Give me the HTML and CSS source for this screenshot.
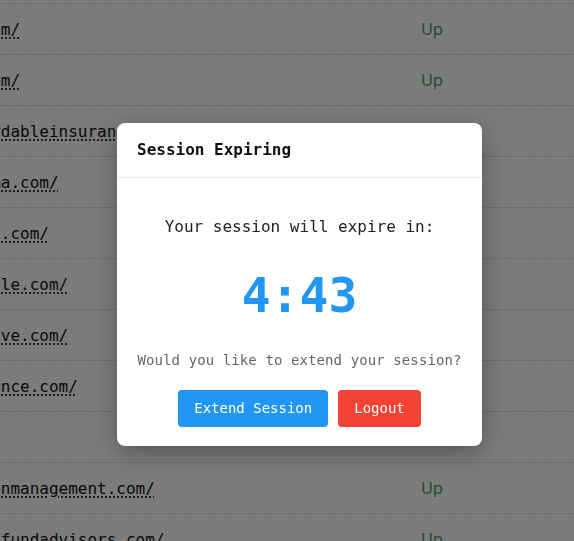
FILE: index.html
```html
<!DOCTYPE html>
<html lang="en">
<head>
<meta charset="utf-8">
<title>Session Expiring</title>
<link rel="stylesheet" href="styles.css">
</head>
<body>
<div class="table">
  <div class="row"><a class="url" href="#">https://www.startpage.com/</a><span class="status">Up</span></div>
  <div class="row"><a class="url" href="#">https://www.ab.com/</a><span class="status">Up</span></div>
  <div class="row"><a class="url" href="#">https://www.cd.com/</a><span class="status">Up</span></div>
  <div class="row"><a class="url" href="#">https://www.affordableinsurance.com/</a><span class="status">Up</span></div>
  <div class="row"><a class="url" href="#">https://www.cinema.com/</a><span class="status">Up</span></div>
  <div class="row"><a class="url" href="#">https://www.trust.com/</a><span class="status">Up</span></div>
  <div class="row"><a class="url" href="#">https://www.example.com/</a><span class="status">Up</span></div>
  <div class="row"><a class="url" href="#">https://www.archive.com/</a><span class="status">Up</span></div>
  <div class="row"><a class="url" href="#">https://www.alliance.com/</a><span class="status">Up</span></div>
  <div class="row"><a class="url" href="#">https://x.com/</a><span class="status">Up</span></div>
  <div class="row"><a class="url" href="#">https://www.goldenmanagement.com/</a><span class="status">Up</span></div>
  <div class="row"><a class="url" href="#">https://www.indexfundadvisors.com/</a><span class="status">Up</span></div>
</div>

<div class="overlay">
  <div class="modal">
    <div class="modal-header">Session Expiring</div>
    <div class="modal-body">
      <p class="lead">Your session will expire in:</p>
      <div class="timer">4:43</div>
      <p class="question">Would you like to extend your session?</p>
      <div class="actions">
        <button class="btn btn-extend">Extend Session</button>
        <button class="btn btn-logout">Logout</button>
      </div>
    </div>
  </div>
</div>
</body>
</html>
```
FILE: styles.css
```css
* { box-sizing: border-box; }

html, body {
  margin: 0;
  padding: 0;
  height: 100%;
  overflow: hidden;
}

body {
  background: #f6f6f6;
  font-family: "DejaVu Sans Mono", "Liberation Mono", monospace;
  color: #111;
}

.table {
  margin-top: -47px;
  margin-left: -163px;
  width: 900px;
}

.row {
  display: grid;
  grid-template-columns: 584px 1fr;
  align-items: center;
  height: 51px;
  border-bottom: 1px solid #dcdcdc;
}

.url {
  color: #111;
  font-size: 16px;
  text-decoration: underline dotted;
  text-underline-offset: 3px;
  white-space: nowrap;
}

.status {
  font-family: "Inter", "Open Sans", sans-serif;
  font-size: 16px;
  color: #4a9a5a;
}

.overlay {
  position: fixed;
  inset: 0;
  background-color: rgba(0, 0, 0, 0.5);
  background-image: radial-gradient(rgba(255, 255, 255, 0.05) 0.8px, transparent 1px);
  background-size: 5px 5px;
  display: flex;
  align-items: center;
  justify-content: center;
  padding-left: 25px;
  padding-top: 28px;
}

.modal {
  width: 365px;
  background: #fff;
  border-radius: 8px;
  box-shadow: 0 6px 24px rgba(0, 0, 0, 0.3);
}

.modal-header {
  padding: 15px 20px;
  border-bottom: 1px solid #eaeaea;
  font-size: 16px;
  line-height: 24px;
  font-weight: bold;
  color: #111;
}

.modal-body {
  padding: 0 20px 19px;
  text-align: center;
}

.lead {
  margin: 37px 0 0;
  font-size: 16px;
  line-height: 24px;
  color: #222;
}

.timer {
  margin-top: 27px;
  font-size: 48px;
  line-height: 58px;
  font-weight: bold;
  color: #2196f3;
}

.question {
  margin: 26px 0 0;
  font-size: 14px;
  line-height: 21px;
  color: #666;
  letter-spacing: 0.1px;
}

.actions {
  margin-top: 19px;
  display: flex;
  justify-content: center;
  gap: 10px;
}

.btn {
  border: none;
  border-radius: 4px;
  padding: 8px 16px;
  font-family: inherit;
  font-size: 14px;
  line-height: 21px;
  color: #fff;
  cursor: pointer;
}

.btn-extend { background: #2196f3; }
.btn-logout { background: #f44336; }
```
